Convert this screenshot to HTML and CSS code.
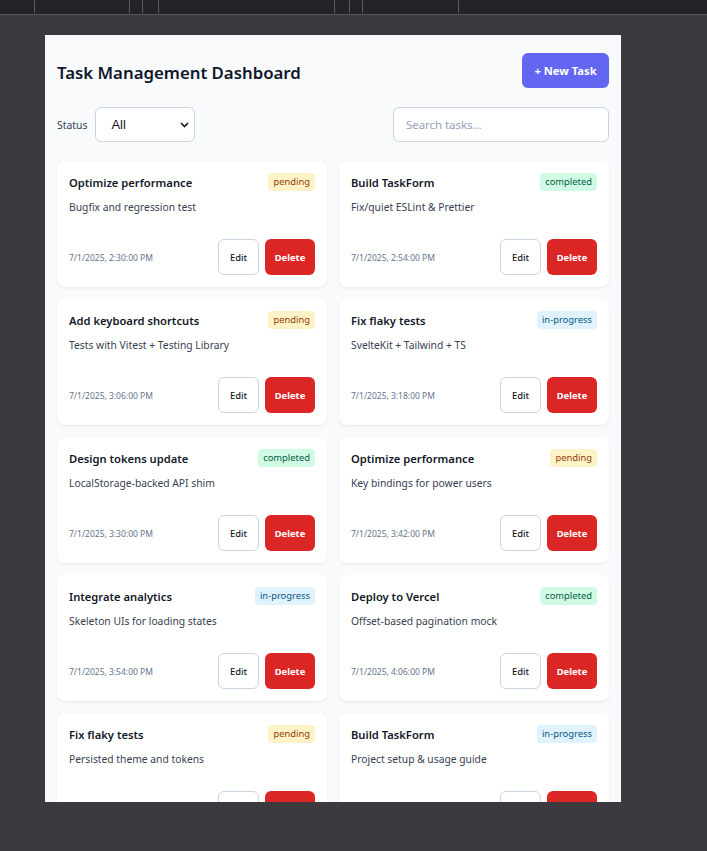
FILE: index.html
```html
<!DOCTYPE html>
<html lang="en">
<head>
<meta charset="utf-8">
<title>Task Management Dashboard</title>
<link rel="stylesheet" href="styles.css">
</head>
<body>
<div class="topbar">
  <span class="tick t1"></span><span class="tick t2"></span><span class="tick t3"></span><span class="tick t4"></span>
  <span class="tick t5"></span><span class="tick t6"></span><span class="tick t7"></span><span class="tick t8"></span>
</div>
<main class="frame">
  <header class="header">
    <h1 class="title">Task Management Dashboard</h1>
    <button class="btn-new">+ New Task</button>
  </header>
  <div class="filters">
    <label class="status">
      <span class="status-label">Status</span>
      <span class="select-wrap">
        <select class="select"><option>All</option><option>pending</option><option>in-progress</option><option>completed</option></select>
        <svg class="chev" width="9" height="6" viewBox="0 0 9 6"><path d="M1 1l3.5 3.5L8 1" fill="none" stroke="#111827" stroke-width="1.6"/></svg>
      </span>
    </label>
    <input class="search" type="text" placeholder="Search tasks...">
  </div>
  <section class="grid">
    <article class="card"><div class="card-head"><h2 class="card-title">Optimize performance</h2><span class="badge pending">pending</span></div><p class="desc">Bugfix and regression test</p><div class="card-foot"><span class="date">7/1/2025, 2:30:00 PM</span><div class="actions"><button class="btn-edit">Edit</button><button class="btn-del">Delete</button></div></div></article>
    <article class="card"><div class="card-head"><h2 class="card-title">Build TaskForm</h2><span class="badge completed">completed</span></div><p class="desc">Fix/quiet ESLint &amp; Prettier</p><div class="card-foot"><span class="date">7/1/2025, 2:54:00 PM</span><div class="actions"><button class="btn-edit">Edit</button><button class="btn-del">Delete</button></div></div></article>
    <article class="card"><div class="card-head"><h2 class="card-title">Add keyboard shortcuts</h2><span class="badge pending">pending</span></div><p class="desc">Tests with Vitest + Testing Library</p><div class="card-foot"><span class="date">7/1/2025, 3:06:00 PM</span><div class="actions"><button class="btn-edit">Edit</button><button class="btn-del">Delete</button></div></div></article>
    <article class="card"><div class="card-head"><h2 class="card-title">Fix flaky tests</h2><span class="badge progress">in-progress</span></div><p class="desc">SvelteKit + Tailwind + TS</p><div class="card-foot"><span class="date">7/1/2025, 3:18:00 PM</span><div class="actions"><button class="btn-edit">Edit</button><button class="btn-del">Delete</button></div></div></article>
    <article class="card"><div class="card-head"><h2 class="card-title">Design tokens update</h2><span class="badge completed">completed</span></div><p class="desc">LocalStorage-backed API shim</p><div class="card-foot"><span class="date">7/1/2025, 3:30:00 PM</span><div class="actions"><button class="btn-edit">Edit</button><button class="btn-del">Delete</button></div></div></article>
    <article class="card"><div class="card-head"><h2 class="card-title">Optimize performance</h2><span class="badge pending">pending</span></div><p class="desc">Key bindings for power users</p><div class="card-foot"><span class="date">7/1/2025, 3:42:00 PM</span><div class="actions"><button class="btn-edit">Edit</button><button class="btn-del">Delete</button></div></div></article>
    <article class="card"><div class="card-head"><h2 class="card-title">Integrate analytics</h2><span class="badge progress">in-progress</span></div><p class="desc">Skeleton UIs for loading states</p><div class="card-foot"><span class="date">7/1/2025, 3:54:00 PM</span><div class="actions"><button class="btn-edit">Edit</button><button class="btn-del">Delete</button></div></div></article>
    <article class="card"><div class="card-head"><h2 class="card-title">Deploy to Vercel</h2><span class="badge completed">completed</span></div><p class="desc">Offset-based pagination mock</p><div class="card-foot"><span class="date">7/1/2025, 4:06:00 PM</span><div class="actions"><button class="btn-edit">Edit</button><button class="btn-del">Delete</button></div></div></article>
    <article class="card"><div class="card-head"><h2 class="card-title">Fix flaky tests</h2><span class="badge pending">pending</span></div><p class="desc">Persisted theme and tokens</p><div class="card-foot"><span class="date">7/1/2025, 4:18:00 PM</span><div class="actions"><button class="btn-edit">Edit</button><button class="btn-del">Delete</button></div></div></article>
    <article class="card"><div class="card-head"><h2 class="card-title">Build TaskForm</h2><span class="badge progress">in-progress</span></div><p class="desc">Project setup &amp; usage guide</p><div class="card-foot"><span class="date">7/1/2025, 4:30:00 PM</span><div class="actions"><button class="btn-edit">Edit</button><button class="btn-del">Delete</button></div></div></article>
  </section>
</main>
</body>
</html>
```
FILE: styles.css
```css
* { box-sizing: border-box; }
html, body { margin: 0; padding: 0; }
body {
  background: #3b3b3f;
  font-family: "Noto Sans", "Open Sans", sans-serif;
  height: 851px;
  overflow: hidden;
}
.topbar {
  position: relative;
  height: 15px;
  background: #222328;
  border-bottom: 1px solid #55565b;
}
.tick {
  position: absolute;
  top: 0;
  width: 1px;
  height: 13px;
  background: #5b5c62;
}
.t1 { left: 34px; } .t2 { left: 129px; } .t3 { left: 142px; } .t4 { left: 158px; }
.t5 { left: 334px; } .t6 { left: 349px; } .t7 { left: 362px; } .t8 { left: 458px; }

.frame {
  margin: 20px 0 0 45px;
  width: 576px;
  height: 767px;
  overflow: hidden;
  background: #f8fafc;
  padding: 18px 12px 0;
}
.header {
  display: flex;
  justify-content: space-between;
  align-items: center;
  height: 35px;
}
.title {
  margin: 0;
  padding-top: 3px;
  font-size: 16.8px;
  font-weight: 600;
  color: #0f172a;
}
.btn-new {
  height: 35px;
  width: 87px;
  border: 0;
  border-radius: 6px;
  background: #6366f1;
  color: #fff;
  font-family: inherit;
  font-size: 11.2px;
  font-weight: 700;
  padding: 0;
}
.filters {
  display: flex;
  justify-content: space-between;
  align-items: center;
  margin-top: 19px;
  height: 35px;
}
.status {
  display: flex;
  align-items: center;
  gap: 8px;
}
.status-label {
  font-size: 10.4px;
  color: #334155;
}
.select-wrap {
  position: relative;
  display: block;
}
.select {
  appearance: none;
  -webkit-appearance: none;
  width: 100px;
  height: 35px;
  border: 1px solid #cbd5e1;
  border-radius: 6px;
  background: #fff;
  font-family: "Liberation Sans", Arial, sans-serif;
  font-size: 13px;
  color: #111827;
  padding: 0 0 0 15px;
  display: block;
}
.chev {
  position: absolute;
  right: 6px;
  top: 15px;
  pointer-events: none;
}
.search {
  width: 216px;
  height: 35px;
  border: 1px solid #cbd5e1;
  border-radius: 6px;
  background: #fff;
  padding: 0 12px;
  font-family: inherit;
  font-size: 11.4px;
  color: #111827;
}
.search::placeholder { color: #94a3b8; }

.grid {
  display: grid;
  grid-template-columns: 270px 270px;
  column-gap: 12px;
  row-gap: 12px;
  margin-top: 19px;
}
.card {
  background: #fff;
  border-radius: 8px;
  box-shadow: 0 1px 3px rgba(15, 23, 42, 0.08);
  padding: 12px;
  display: flex;
  flex-direction: column;
}
.card-head {
  display: flex;
  justify-content: space-between;
  align-items: center;
  height: 18px;
}
.card-title {
  margin: 0;
  font-size: 11.2px;
  font-weight: 600;
  color: #111827;
}
.badge {
  font-size: 9.4px;
  line-height: 18px;
  height: 18px;
  padding: 0 5px;
  border-radius: 4px;
}
.pending { background: #fef3c7; color: #92400e; }
.completed { background: #d1fae5; color: #065f46; }
.progress { background: #e0f2fe; color: #075985; }
.desc {
  margin: 8px 0 0;
  font-size: 10.3px;
  line-height: 16px;
  color: #374151;
}
.card-foot {
  margin-top: 24px;
  display: flex;
  justify-content: space-between;
  align-items: center;
  height: 36px;
}
.date {
  font-size: 8.5px;
  color: #64748b;
}
.actions {
  display: flex;
  gap: 6px;
}
.btn-edit, .btn-del {
  height: 36px;
  border-radius: 6px;
  font-family: inherit;
  font-size: 9.4px;
  padding: 0;
}
.btn-edit {
  width: 41px;
  background: #fff;
  border: 1px solid #cbd5e1;
  color: #111827;
  font-weight: 500;
}
.btn-del {
  width: 50px;
  background: #dc2626;
  border: 0;
  color: #fff;
  font-weight: 700;
}
```
